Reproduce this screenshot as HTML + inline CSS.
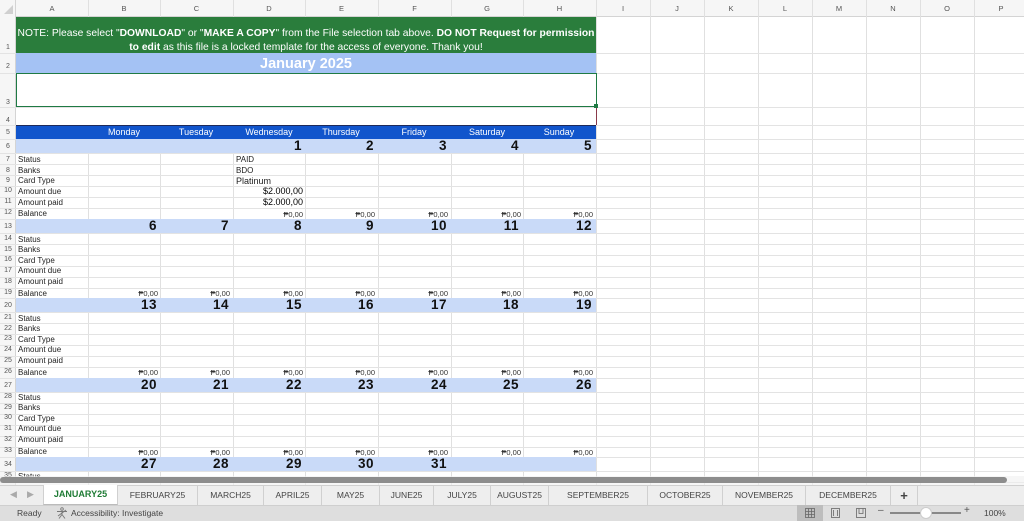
<!DOCTYPE html>
<html><head><meta charset="utf-8"><style>
*{margin:0;padding:0;box-sizing:border-box}
body{width:1024px;height:521px;overflow:hidden;background:#fff;font-family:"Liberation Sans",sans-serif;position:relative}
.a{position:absolute}
.hl{position:absolute;left:0;width:1024px;height:1px;background:#e3e3e3}
.ch{position:absolute;top:0;height:17px;font-size:7.5px;color:#555;text-align:center;line-height:17px}
.rn{position:absolute;left:0;width:16px;font-size:7px;color:#555;text-align:center}
.lbl{position:absolute;left:18px;font-size:8px;color:#222}
.bal{position:absolute;font-size:7.5px;color:#333;text-align:right;width:70px}
.dt{position:absolute;font-size:13.5px;font-weight:bold;color:#111;text-align:right;width:70px;line-height:14px;letter-spacing:0.5px}
.day{position:absolute;top:125px;height:14px;line-height:15px;color:#fff;font-size:9px;text-align:center;width:72px}
.tab{position:absolute;top:486px;height:19px;line-height:19px;font-size:8.5px;color:#444;text-align:center;border-right:1px solid #d0d0d0}
</style></head><body>
<div class="a" style="left:0;top:0;width:1024px;height:17px;background:#f6f6f6;border-bottom:1px solid #d4d4d4"></div>
<div class="a" style="left:0;top:0;width:16px;height:485px;background:#f6f6f6;border-right:1px solid #d4d4d4"></div>
<svg class="a" style="left:0;top:0" width="1024" height="485">
<g stroke="#e0e0e0" stroke-width="1">
<line x1="88.5" y1="0" x2="88.5" y2="485"/><line x1="160.5" y1="0" x2="160.5" y2="485"/><line x1="233.5" y1="0" x2="233.5" y2="485"/><line x1="305.5" y1="0" x2="305.5" y2="485"/><line x1="378.5" y1="0" x2="378.5" y2="485"/><line x1="451.5" y1="0" x2="451.5" y2="485"/><line x1="523.5" y1="0" x2="523.5" y2="485"/><line x1="596.5" y1="0" x2="596.5" y2="485"/><line x1="650.5" y1="0" x2="650.5" y2="485"/><line x1="704.5" y1="0" x2="704.5" y2="485"/><line x1="758.5" y1="0" x2="758.5" y2="485"/><line x1="812.5" y1="0" x2="812.5" y2="485"/><line x1="866.5" y1="0" x2="866.5" y2="485"/><line x1="920.5" y1="0" x2="920.5" y2="485"/><line x1="974.5" y1="0" x2="974.5" y2="485"/>
</g>
<polygon points="4,14 13,14 13,5" fill="#d0d0d0"/>
</svg>
<div class="ch" style="left:16px;width:72px">A</div><div class="ch" style="left:88px;width:72px">B</div><div class="ch" style="left:160px;width:73px">C</div><div class="ch" style="left:233px;width:72px">D</div><div class="ch" style="left:305px;width:73px">E</div><div class="ch" style="left:378px;width:73px">F</div><div class="ch" style="left:451px;width:72px">G</div><div class="ch" style="left:523px;width:73px">H</div><div class="ch" style="left:596px;width:54px">I</div><div class="ch" style="left:650px;width:54px">J</div><div class="ch" style="left:704px;width:54px">K</div><div class="ch" style="left:758px;width:54px">L</div><div class="ch" style="left:812px;width:54px">M</div><div class="ch" style="left:866px;width:54px">N</div><div class="ch" style="left:920px;width:54px">O</div><div class="ch" style="left:974px;width:54px">P</div>

<div class="hl" style="top:53px"></div><div class="hl" style="top:73px"></div><div class="hl" style="top:107px"></div><div class="hl" style="top:125px"></div><div class="hl" style="top:139px"></div>
<div class="hl" style="top:153px"></div><div class="hl" style="top:164px"></div><div class="hl" style="top:175px"></div><div class="hl" style="top:186px"></div><div class="hl" style="top:197px"></div><div class="hl" style="top:208px"></div><div class="hl" style="top:219px"></div>
<div class="hl" style="top:233px"></div><div class="hl" style="top:244px"></div><div class="hl" style="top:255px"></div><div class="hl" style="top:266px"></div><div class="hl" style="top:277px"></div><div class="hl" style="top:288px"></div><div class="hl" style="top:298px"></div>
<div class="hl" style="top:312px"></div><div class="hl" style="top:323px"></div><div class="hl" style="top:334px"></div><div class="hl" style="top:345px"></div><div class="hl" style="top:356px"></div><div class="hl" style="top:367px"></div><div class="hl" style="top:378px"></div>
<div class="hl" style="top:392px"></div><div class="hl" style="top:403px"></div><div class="hl" style="top:414px"></div><div class="hl" style="top:425px"></div><div class="hl" style="top:436px"></div><div class="hl" style="top:447px"></div><div class="hl" style="top:457px"></div>
<div class="hl" style="top:471px"></div><div class="hl" style="top:482px"></div>

<div class="a" style="left:16px;top:17px;width:580px;height:36px;background:#2a7d3c;color:#fff;font-size:10.3px;text-align:center;padding-top:10px;line-height:14px">NOTE: Please select "<b>DOWNLOAD</b>" or "<b>MAKE A COPY</b>" from the File selection tab above. <b>DO NOT Request for permission<br>to edit</b> as this file is a locked template for the access of everyone. Thank you!</div>
<div class="a" style="left:16px;top:53px;width:580px;height:20px;background:#a4c2f4;color:#fff;font-size:14.5px;font-weight:bold;text-align:center;line-height:22px">January 2025</div>
<div class="a" style="left:16px;top:73px;width:581px;height:34px;background:#fff;border:1.5px solid #1f7a44"></div>
<div class="a" style="left:594px;top:104px;width:4px;height:4px;background:#1f7a44"></div>
<div class="a" style="left:16px;top:108px;width:581px;height:17px;background:#fff;border-right:1px solid #8a3a4a"></div>
<div class="a" style="left:16px;top:125px;width:580px;height:14px;background:#1155cc;border-top:1.5px solid #1e2a5a"></div>
<div class="day" style="left:88px">Monday</div><div class="day" style="left:160px">Tuesday</div><div class="day" style="left:233px">Wednesday</div><div class="day" style="left:305px">Thursday</div><div class="day" style="left:378px">Friday</div><div class="day" style="left:451px">Saturday</div><div class="day" style="left:523px">Sunday</div>

<div class="a" style="left:16px;top:139px;width:580px;height:14px;background:#c9daf8"></div>
<div class="a" style="left:16px;top:219px;width:580px;height:14px;background:#c9daf8"></div>
<div class="a" style="left:16px;top:298px;width:580px;height:14px;background:#c9daf8"></div>
<div class="a" style="left:16px;top:378px;width:580px;height:14px;background:#c9daf8"></div>
<div class="a" style="left:16px;top:457px;width:580px;height:14px;background:#c9daf8"></div>

<div class="dt" style="left:232px;top:139px">1</div><div class="dt" style="left:304px;top:139px">2</div><div class="dt" style="left:377px;top:139px">3</div><div class="dt" style="left:449px;top:139px">4</div><div class="dt" style="left:522px;top:139px">5</div>
<div class="dt" style="left:87px;top:219px">6</div><div class="dt" style="left:159px;top:219px">7</div><div class="dt" style="left:232px;top:219px">8</div><div class="dt" style="left:304px;top:219px">9</div><div class="dt" style="left:377px;top:219px">10</div><div class="dt" style="left:449px;top:219px">11</div><div class="dt" style="left:522px;top:219px">12</div>
<div class="dt" style="left:87px;top:298px">13</div><div class="dt" style="left:159px;top:298px">14</div><div class="dt" style="left:232px;top:298px">15</div><div class="dt" style="left:304px;top:298px">16</div><div class="dt" style="left:377px;top:298px">17</div><div class="dt" style="left:449px;top:298px">18</div><div class="dt" style="left:522px;top:298px">19</div>
<div class="dt" style="left:87px;top:378px">20</div><div class="dt" style="left:159px;top:378px">21</div><div class="dt" style="left:232px;top:378px">22</div><div class="dt" style="left:304px;top:378px">23</div><div class="dt" style="left:377px;top:378px">24</div><div class="dt" style="left:449px;top:378px">25</div><div class="dt" style="left:522px;top:378px">26</div>
<div class="dt" style="left:87px;top:457px">27</div><div class="dt" style="left:159px;top:457px">28</div><div class="dt" style="left:232px;top:457px">29</div><div class="dt" style="left:304px;top:457px">30</div><div class="dt" style="left:377px;top:457px">31</div>

<div class="lbl" style="top:155px">Status</div><div class="lbl" style="top:166px">Banks</div><div class="lbl" style="top:176px">Card Type</div><div class="lbl" style="top:187px">Amount due</div><div class="lbl" style="top:198px">Amount paid</div><div class="lbl" style="top:209px">Balance</div>
<div class="lbl" style="top:235px">Status</div><div class="lbl" style="top:245px">Banks</div><div class="lbl" style="top:256px">Card Type</div><div class="lbl" style="top:266px">Amount due</div><div class="lbl" style="top:277px">Amount paid</div><div class="lbl" style="top:289px">Balance</div>
<div class="lbl" style="top:314px">Status</div><div class="lbl" style="top:324px">Banks</div><div class="lbl" style="top:335px">Card Type</div><div class="lbl" style="top:345px">Amount due</div><div class="lbl" style="top:356px">Amount paid</div><div class="lbl" style="top:368px">Balance</div>
<div class="lbl" style="top:393px">Status</div><div class="lbl" style="top:403px">Banks</div><div class="lbl" style="top:414px">Card Type</div><div class="lbl" style="top:424px">Amount due</div><div class="lbl" style="top:435px">Amount paid</div><div class="lbl" style="top:447px">Balance</div>
<div class="lbl" style="top:472px">Status</div>

<div class="lbl" style="left:236px;top:155px">PAID</div><div class="lbl" style="left:236px;top:166px">BDO</div>
<div class="lbl" style="left:236px;top:176px;font-size:9px">Platinum</div>
<div class="a" style="left:233px;top:186px;width:70px;text-align:right;font-size:9px">$2.000,00</div>
<div class="a" style="left:233px;top:197px;width:70px;text-align:right;font-size:9px">$2.000,00</div>

<div class="bal" style="left:233px;top:210px">₱0,00</div><div class="bal" style="left:305px;top:210px">₱0,00</div><div class="bal" style="left:378px;top:210px">₱0,00</div><div class="bal" style="left:451px;top:210px">₱0,00</div><div class="bal" style="left:523px;top:210px">₱0,00</div>
<div class="bal" style="left:88px;top:289px">₱0,00</div><div class="bal" style="left:160px;top:289px">₱0,00</div><div class="bal" style="left:233px;top:289px">₱0,00</div><div class="bal" style="left:305px;top:289px">₱0,00</div><div class="bal" style="left:378px;top:289px">₱0,00</div><div class="bal" style="left:451px;top:289px">₱0,00</div><div class="bal" style="left:523px;top:289px">₱0,00</div>
<div class="bal" style="left:88px;top:368px">₱0,00</div><div class="bal" style="left:160px;top:368px">₱0,00</div><div class="bal" style="left:233px;top:368px">₱0,00</div><div class="bal" style="left:305px;top:368px">₱0,00</div><div class="bal" style="left:378px;top:368px">₱0,00</div><div class="bal" style="left:451px;top:368px">₱0,00</div><div class="bal" style="left:523px;top:368px">₱0,00</div>
<div class="bal" style="left:88px;top:448px">₱0,00</div><div class="bal" style="left:160px;top:448px">₱0,00</div><div class="bal" style="left:233px;top:448px">₱0,00</div><div class="bal" style="left:305px;top:448px">₱0,00</div><div class="bal" style="left:378px;top:448px">₱0,00</div><div class="bal" style="left:451px;top:448px">₱0,00</div><div class="bal" style="left:523px;top:448px">₱0,00</div>

<div class="rn" style="top:44px">1</div><div class="rn" style="top:63px">2</div><div class="rn" style="top:99px">3</div><div class="rn" style="top:117px">4</div><div class="rn" style="top:129px">5</div><div class="rn" style="top:143px">6</div>
<div class="rn" style="top:156px">7</div><div class="rn" style="top:167px">8</div><div class="rn" style="top:177px">9</div><div class="rn" style="top:187px">10</div><div class="rn" style="top:198px">11</div><div class="rn" style="top:209px">12</div><div class="rn" style="top:223px">13</div>
<div class="rn" style="top:235px">14</div><div class="rn" style="top:246px">15</div><div class="rn" style="top:256px">16</div><div class="rn" style="top:267px">17</div><div class="rn" style="top:278px">18</div><div class="rn" style="top:289px">19</div><div class="rn" style="top:302px">20</div>
<div class="rn" style="top:314px">21</div><div class="rn" style="top:325px">22</div><div class="rn" style="top:335px">23</div><div class="rn" style="top:346px">24</div><div class="rn" style="top:357px">25</div><div class="rn" style="top:368px">26</div><div class="rn" style="top:382px">27</div>
<div class="rn" style="top:393px">28</div><div class="rn" style="top:404px">29</div><div class="rn" style="top:414px">30</div><div class="rn" style="top:425px">31</div><div class="rn" style="top:436px">32</div><div class="rn" style="top:447px">33</div><div class="rn" style="top:461px">34</div>
<div class="rn" style="top:472px">35</div>

<div class="a" style="left:0;top:476px;width:1024px;height:9px;background:rgba(240,240,240,0.6)"></div>
<div class="a" style="left:0;top:477px;width:1007px;height:6px;background:#8d8d8d;border-radius:3px"></div>

<div class="a" style="left:0;top:485px;width:1024px;height:20px;background:#eeeeee;border-top:1px solid #d0d0d0"></div>
<div class="a" style="left:10px;top:489px;font-size:9px;color:#aaa">◀</div><div class="a" style="left:27px;top:489px;font-size:9px;color:#aaa">▶</div>
<div class="tab" style="left:43px;width:75px;background:#fff;color:#1e7b34;font-weight:bold;top:485px;height:20px;border-left:1px solid #d0d0d0;border-bottom:1px solid #bbb;font-size:9px">JANUARY25</div>
<div class="tab" style="left:118px;width:80px">FEBRUARY25</div><div class="tab" style="left:198px;width:66px">MARCH25</div><div class="tab" style="left:264px;width:58px">APRIL25</div><div class="tab" style="left:322px;width:58px">MAY25</div><div class="tab" style="left:380px;width:54px">JUNE25</div><div class="tab" style="left:434px;width:57px">JULY25</div><div class="tab" style="left:491px;width:58px">AUGUST25</div><div class="tab" style="left:549px;width:99px">SEPTEMBER25</div><div class="tab" style="left:648px;width:75px">OCTOBER25</div><div class="tab" style="left:723px;width:83px">NOVEMBER25</div><div class="tab" style="left:806px;width:85px">DECEMBER25</div><div class="tab" style="left:891px;width:27px;font-size:13px;font-weight:bold">+</div>

<div class="a" style="left:0;top:505px;width:1024px;height:16px;background:#dedede;border-top:1px solid #cfcfcf"></div>
<div class="a" style="left:17px;top:508px;font-size:8.5px;color:#444">Ready</div>
<svg class="a" style="left:56px;top:507px" width="12" height="12"><g fill="none" stroke="#777" stroke-width="0.9"><circle cx="6" cy="2" r="1.3"/><path d="M1 4.5h10M6 4.5v3M6 7.5l-3 4M6 7.5l3 4M2 9l8-6"/></g></svg>
<div class="a" style="left:71px;top:508px;font-size:8.5px;color:#444">Accessibility: Investigate</div>
<div class="a" style="left:797px;top:505px;width:26px;height:16px;background:#bdbdbd"></div>
<svg class="a" style="left:797px;top:505px" width="80" height="16"><g fill="none" stroke="#666" stroke-width="0.8"><rect x="8.5" y="3.5" width="9" height="9"/><path d="M11.5 3.5v9M14.5 3.5v9M8.5 6.5h9M8.5 9.5h9"/><rect x="34.5" y="3.5" width="8" height="9"/><path d="M36.5 5v6M40.5 5v6"/><rect x="59.5" y="3.5" width="9" height="9"/><path d="M62 3.5v5h4v-5"/></g></svg>
<div class="a" style="left:878px;top:505px;font-size:10px;color:#555">–</div>
<div class="a" style="left:890px;top:512px;width:71px;height:2px;background:#888"></div>
<div class="a" style="left:920px;top:507px;width:12px;height:12px;border-radius:6px;background:#fff;border:1px solid #ccc"></div>
<div class="a" style="left:964px;top:505px;font-size:10px;color:#555">+</div>
<div class="a" style="left:984px;top:508px;font-size:8.5px;color:#444">100%</div>
</body></html>
